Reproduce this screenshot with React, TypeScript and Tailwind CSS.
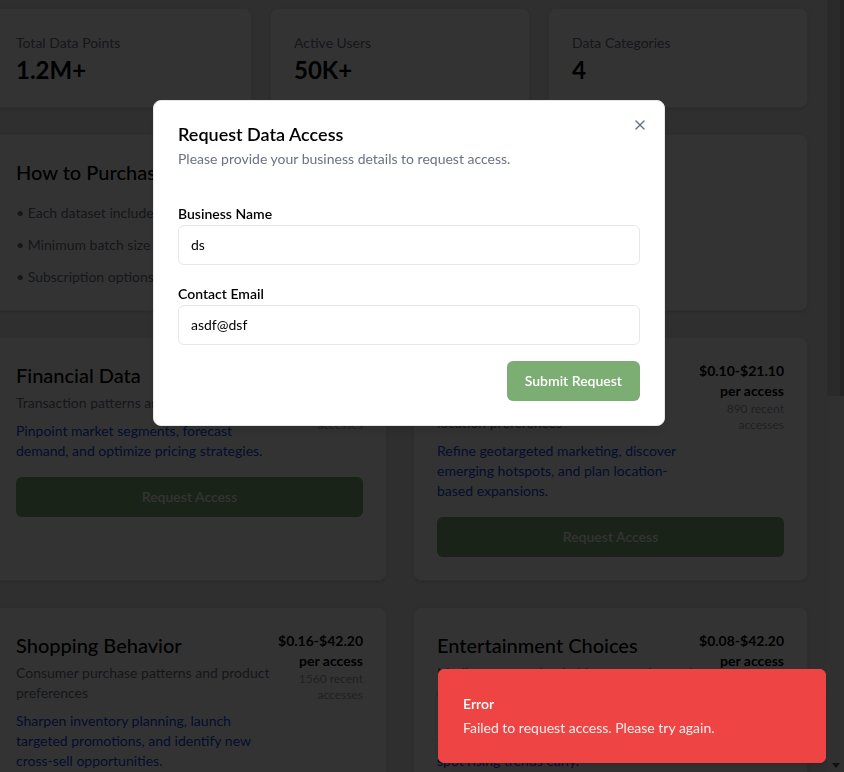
import React from "react";

type DataCard = {
  title: string;
  desc: string;
  use: string;
  price: string;
  recent: string;
};

const cards: DataCard[] = [
  {
    title: "Financial Data",
    desc: "Transaction patterns and spending habits",
    use: "Pinpoint market segments, forecast demand, and optimize pricing strategies.",
    price: "$0.12-$35.40",
    recent: "1240 recent accesses",
  },
  {
    title: "Location Data",
    desc: "Foot traffic, movement patterns, and location preferences",
    use: "Refine geotargeted marketing, discover emerging hotspots, and plan location-based expansions.",
    price: "$0.10-$21.10",
    recent: "890 recent accesses",
  },
  {
    title: "Shopping Behavior",
    desc: "Consumer purchase patterns and product preferences",
    use: "Sharpen inventory planning, launch targeted promotions, and identify new cross-sell opportunities.",
    price: "$0.16-$42.20",
    recent: "1560 recent accesses",
  },
  {
    title: "Entertainment Choices",
    desc: "Media consumption habits, streaming and content preferences",
    use: "Personalize content recommendations, fine-tune ad placements and timing, and spot rising trends early.",
    price: "$0.08-$42.20",
    recent: "2100 recent accesses",
  },
];

function StatCard({ label, value }: { label: string; value: string }) {
  return (
    <div className="h-[100px] rounded-lg border border-gray-200 bg-white p-[23px] pt-6 shadow-sm">
      <div className="text-sm leading-5 text-gray-500">{label}</div>
      <div className="mt-px text-2xl leading-8 font-bold text-black">{value}</div>
    </div>
  );
}

function Card({ c }: { c: DataCard }) {
  return (
    <div className="rounded-lg border border-gray-200 bg-white p-[23px] shadow-sm">
      <div className="flex items-start">
        <div className="w-[262px] shrink-0">
          <div className="text-xl leading-7 font-medium text-black">{c.title}</div>
          <div className="mt-1 text-sm leading-5 text-gray-500">{c.desc}</div>
          <div className="mt-2 text-sm leading-5 text-blue-700">{c.use}</div>
        </div>
        <div className="min-w-0 flex-1 text-right">
          <div className="whitespace-nowrap text-sm leading-5 font-bold text-black">{c.price}</div>
          <div className="text-sm leading-5 font-bold text-black">per access</div>
          <div className="text-xs leading-4 text-gray-400">{c.recent}</div>
        </div>
      </div>
      <button className="mt-4 h-10 w-full rounded-md bg-[#7cad72] text-sm font-semibold text-white">
        Request Access
      </button>
    </div>
  );
}

export default function App() {
  return (
    <div className="relative h-[772px] w-[844px] overflow-hidden font-['Lato',sans-serif]">
      <div className="flex h-full bg-[#e8e8e8]">
        <div className="w-[827px] overflow-hidden">
          <div className="ml-[-8px] flex w-[816px] flex-col gap-[26px] pt-2">
            <div className="grid grid-cols-3 gap-[18px]">
              <StatCard label="Total Data Points" value="1.2M+" />
              <StatCard label="Active Users" value="50K+" />
              <StatCard label="Data Categories" value="4" />
            </div>
            <div className="rounded-lg border border-gray-200 bg-white p-[23px] shadow-sm">
              <div className="text-xl leading-7 font-medium text-black">How to Purchase</div>
              <ul className="mt-[17px] flex flex-col gap-3 text-sm leading-5 text-gray-500">
                <li>• Each dataset includes anonymized, aggregated insights refreshed on a regular basis.</li>
                <li>• Minimum batch size of 1,000 data points per purchase, with volume discounts for larger orders.</li>
                <li>• Subscription options are available for continuous access to updated datasets.</li>
              </ul>
            </div>
            <div className="grid grid-cols-2 gap-[26px]">
              {cards.map((c) => (
                <Card key={c.title} c={c} />
              ))}
            </div>
          </div>
        </div>
        <div className="flex w-[17px] flex-col bg-[#f0f0f0]">
          <div className="flex h-[396px]">
            <div className="w-[13px] bg-[#d2d2d2]" />
            <div className="w-[4px] bg-[#b4b4b4]" />
          </div>
          <div className="flex-1" />
          <div className="flex h-[14px] items-center justify-center">
            <svg width="8" height="5" viewBox="0 0 8 5">
              <path d="M0 0 L8 0 L4 5 Z" fill="#505050" />
            </svg>
          </div>
        </div>
      </div>

      <div className="fixed inset-0 bg-black/80" />

      <div className="fixed left-[153px] top-[100px] w-[512px] rounded-lg border border-gray-200 bg-white p-6 shadow-lg">
        <button className="absolute right-4 top-4 text-gray-500">
          <svg width="16" height="16" viewBox="0 0 24 24" fill="none" stroke="currentColor" strokeWidth="2" strokeLinecap="round" strokeLinejoin="round">
            <path d="M18 6 6 18" />
            <path d="m6 6 12 12" />
          </svg>
        </button>
        <div className="text-lg leading-none font-semibold text-black">Request Data Access</div>
        <div className="mt-1.5 text-sm leading-5 text-gray-500">Please provide your business details to request access.</div>
        <div className="mt-[35px]">
          <div className="text-sm leading-5 font-semibold text-black">Business Name</div>
          <div className="mt-px flex h-10 items-center rounded-md border border-gray-200 px-3 text-sm text-black">ds</div>
          <div className="mt-[19px] text-sm leading-5 font-semibold text-black">Contact Email</div>
          <div className="mt-px flex h-10 items-center rounded-md border border-gray-200 px-3 text-sm text-black">asdf@dsf</div>
        </div>
        <div className="mt-4 flex justify-end">
          <button className="h-10 rounded-md bg-[#7cad72] px-[18px] text-sm font-semibold text-white">Submit Request</button>
        </div>
      </div>

      <div className="fixed left-[438px] top-[669px] w-[388px] rounded-md border border-[#ef4444] bg-[#ef4444] p-6 pr-8 text-white shadow-lg">
        <div className="text-sm leading-5 font-semibold">Error</div>
        <div className="mt-1 text-sm leading-5 opacity-90">Failed to request access. Please try again.</div>
      </div>
    </div>
  );
}
